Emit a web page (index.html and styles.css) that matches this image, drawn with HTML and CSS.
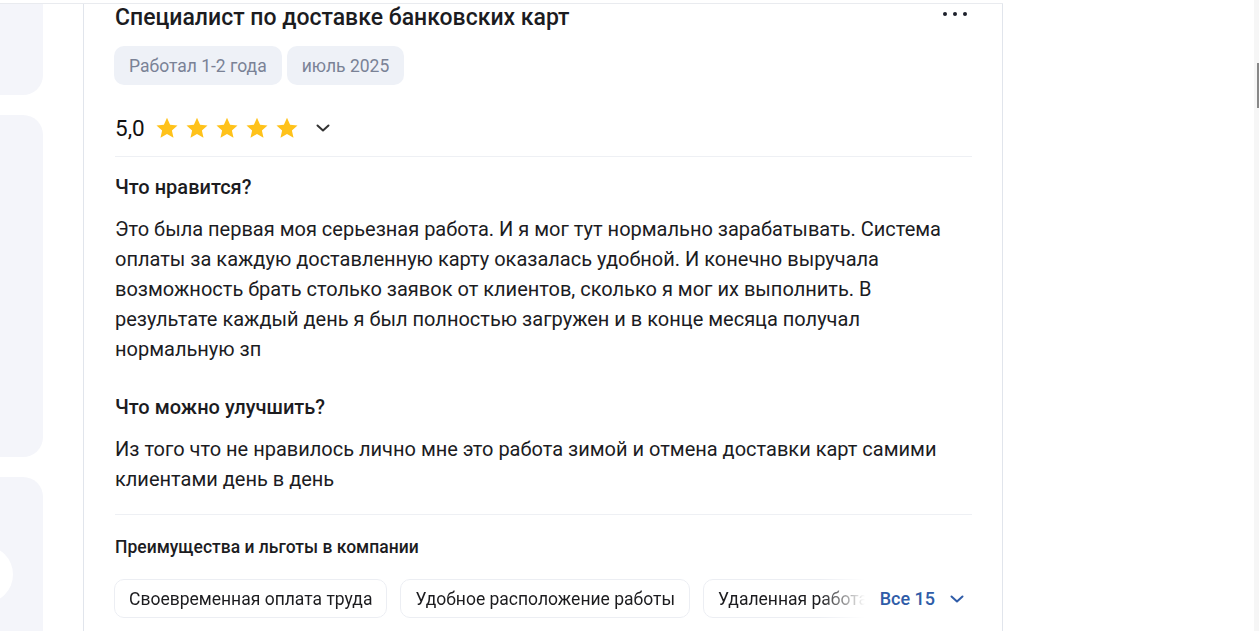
FILE: index.html
```html
<!DOCTYPE html>
<html lang="ru">
<head>
<meta charset="utf-8">
<title>Отзыв</title>
<link rel="stylesheet" href="styles.css">
</head>
<body>
<div class="page">
  <aside class="side">
    <div class="side-block b1"></div>
    <div class="side-block b2"></div>
    <div class="side-block b3"><span class="hole"></span></div>
  </aside>
  <article class="card">
    <div class="head">
      <h2 class="title">Специалист по доставке банковских карт</h2>
      <button class="more" aria-label="Ещё"><i></i><i></i><i></i></button>
    </div>
    <div class="tags">
      <span class="tag">Работал 1-2 года</span>
      <span class="tag">июль 2025</span>
    </div>
    <div class="rating">
      <span class="score">5,0</span>
      <span class="stars">
        <svg viewBox="0 0 24 24"><path d="M12 1.8l3.1 6.9 7.4.7-5.6 5 1.6 7.4L12 18l-6.5 3.8 1.6-7.4-5.6-5 7.4-.7z"/></svg>
        <svg viewBox="0 0 24 24"><path d="M12 1.8l3.1 6.9 7.4.7-5.6 5 1.6 7.4L12 18l-6.5 3.8 1.6-7.4-5.6-5 7.4-.7z"/></svg>
        <svg viewBox="0 0 24 24"><path d="M12 1.8l3.1 6.9 7.4.7-5.6 5 1.6 7.4L12 18l-6.5 3.8 1.6-7.4-5.6-5 7.4-.7z"/></svg>
        <svg viewBox="0 0 24 24"><path d="M12 1.8l3.1 6.9 7.4.7-5.6 5 1.6 7.4L12 18l-6.5 3.8 1.6-7.4-5.6-5 7.4-.7z"/></svg>
        <svg viewBox="0 0 24 24"><path d="M12 1.8l3.1 6.9 7.4.7-5.6 5 1.6 7.4L12 18l-6.5 3.8 1.6-7.4-5.6-5 7.4-.7z"/></svg>
      </span>
      <svg class="chev" viewBox="0 0 14 8"><path d="M1.5 1.5L7 6.5l5.5-5"/></svg>
    </div>
    <hr class="divider">
    <h3 class="q">Что нравится?</h3>
    <p class="answer">Это была первая моя серьезная работа. И я мог тут нормально зарабатывать. Система оплаты за каждую доставленную карту оказалась удобной. И конечно выручала возможность брать столько заявок от клиентов, сколько я мог их выполнить. В результате каждый день я был полностью загружен и в конце месяца получал нормальную зп</p>
    <h3 class="q q2">Что можно улучшить?</h3>
    <p class="answer">Из того что не нравилось лично мне это работа зимой и отмена доставки карт самими клиентами день в день</p>
    <hr class="divider d2">
    <h4 class="perks-title">Преимущества и льготы в компании</h4>
    <div class="perks">
      <div class="chips">
        <span class="chip">Своевременная оплата труда</span>
        <span class="chip">Удобное расположение работы</span>
        <span class="chip">Удаленная работа</span>
      </div>
      <button class="all">Все 15 <svg class="chev blue" viewBox="0 0 14 8"><path d="M1.5 1.5L7 6.5l5.5-5"/></svg></button>
    </div>
  </article>
</div>
<div class="scrollbar"><span class="thumb"></span></div>
</body>
</html>
```
FILE: styles.css
```css
* { box-sizing: border-box; }
html, body { margin: 0; padding: 0; background: #fff; }
body {
  font-family: Roboto, "Noto Sans", "Liberation Sans", sans-serif;
  color: #1c1c1f;
  height: 631px;
  overflow: hidden;
}
.page {
  display: flex;
  gap: 40px;
  width: 1003px;
  margin-top: 3px;
  border-top: 1px solid #e9ebef;
  height: 628px;
}
.side {
  width: 43px;
  flex: none;
  display: flex;
  flex-direction: column;
  gap: 20px;
}
.side-block {
  background: #f4f5fa;
  border-radius: 0 20px 20px 0;
}
.b1 { height: 91px; border-radius: 0 0 20px 0; }
.b2 { height: 342px; }
.b3 { flex: 1; border-radius: 0 20px 0 0; position: relative; overflow: hidden; }
.hole {
  position: absolute;
  left: -44px;
  top: 69px;
  width: 57px;
  height: 57px;
  border-radius: 50%;
  background: #fff;
}
.card {
  width: 920px;
  flex: none;
  border-left: 1px solid #e1e5ec;
  border-right: 1px solid #e1e5ec;
  padding: 0 30px 0 30px;
}
.head {
  display: flex;
  justify-content: space-between;
  align-items: flex-start;
  padding-left: 1px;
}
.title {
  margin: 0;
  font-size: 23px;
  line-height: 28px;
  font-weight: 500;
  color: #1c1c1f;
}
.more {
  border: 0;
  background: none;
  padding: 0;
  margin: 8px 5px 0 0;
  display: flex;
  gap: 6px;
  cursor: pointer;
}
.more i {
  width: 4px;
  height: 4px;
  border-radius: 50%;
  background: #1c1f2b;
}
.tags {
  display: flex;
  gap: 5px;
  margin-top: 14px;
}
.tag {
  background: #eef1f7;
  color: #7a8296;
  border-radius: 10px;
  height: 39px;
  padding: 0 15px;
  display: flex;
  align-items: center;
  font-size: 17.5px;
}
.rating {
  display: flex;
  align-items: center;
  height: 32px;
  margin-top: 27px;
  padding-left: 1px;
}
.score {
  font-size: 22.5px;
  line-height: 32px;
  color: #111;
}
.stars {
  display: flex;
  gap: 6px;
  margin-left: 10px;
}
.stars svg {
  width: 24px;
  height: 24px;
  fill: #ffc21a;
}
.chev {
  width: 14px;
  height: 8px;
  fill: none;
  stroke: #333;
  stroke-width: 2;
  stroke-linecap: round;
  stroke-linejoin: round;
  margin-left: 17px;
}
.divider {
  border: 0;
  border-top: 1px solid #eef0f4;
  margin: 12px 0 0 1px;
}
.q {
  margin: 17px 0 0 1px;
  font-size: 20px;
  line-height: 26px;
  font-weight: 500;
}
.q2 { margin-top: 30px; }
.answer {
  margin: 14px 0 0 1px;
  font-size: 20px;
  line-height: 30px;
  color: #1c1c1f;
}
.d2 { margin-top: 20px; }
.perks-title {
  margin: 21px 0 0 1px;
  font-size: 17.5px;
  line-height: 22px;
  font-weight: 500;
}
.perks {
  display: flex;
  align-items: center;
  margin-top: 21px;
}
.chips {
  flex: 1;
  display: flex;
  gap: 13px;
  overflow: hidden;
  white-space: nowrap;
  -webkit-mask-image: linear-gradient(to right, #000 calc(100% - 45px), transparent 100%);
  mask-image: linear-gradient(to right, #000 calc(100% - 45px), transparent 100%);
}
.chip {
  flex: none;
  height: 39px;
  display: flex;
  align-items: center;
  padding: 0 14px;
  border: 1px solid #eceef3;
  border-radius: 10px;
  font-size: 17.5px;
  color: #1c1c1f;
}
.all {
  flex: none;
  border: 0;
  background: none;
  font-family: inherit;
  font-size: 18px;
  font-weight: 500;
  color: #2f5ca8;
  display: flex;
  align-items: center;
  padding: 0 8px 0 15px;
  cursor: pointer;
}
.chev.blue { stroke: #2f5ca8; margin-left: 15px; }
.scrollbar {
  position: fixed;
  right: 0;
  top: 0;
  width: 5px;
  height: 631px;
  background: #f6f6f6;
}
.thumb {
  position: absolute;
  right: 0;
  top: 63px;
  width: 2px;
  height: 45px;
  background: #888;
}
```
